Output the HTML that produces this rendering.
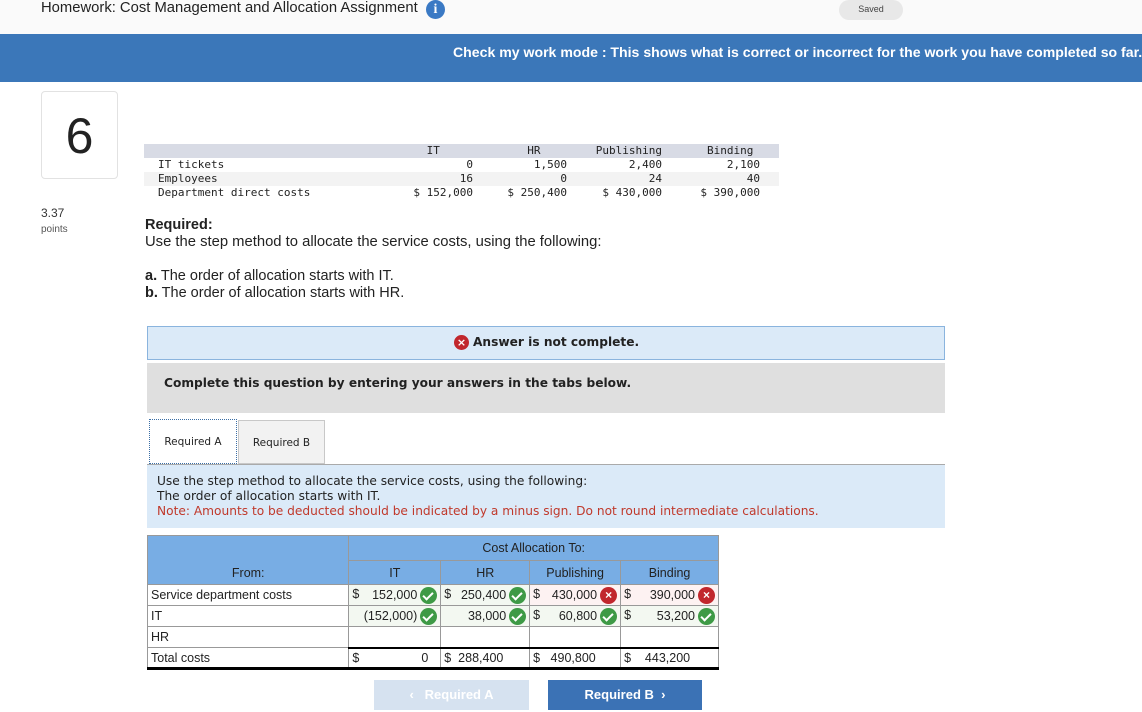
<!DOCTYPE html>
<html><head><meta charset="utf-8"><style>
*{margin:0;padding:0;box-sizing:border-box}
body{width:1142px;height:712px;position:relative;background:#fff;font-family:"Liberation Sans",sans-serif;color:#222;overflow:hidden}
.a{position:absolute}
.mono{font-family:"DejaVu Sans Mono","Liberation Mono",monospace;font-size:11px;color:#222}
.v{font-family:"DejaVu Sans","Liberation Sans",sans-serif}
.ok,.no{display:inline-block;width:17px;height:17px;border-radius:50%;vertical-align:middle;position:relative;margin-left:3px}
.ok{background:#3e9a46}
.ok:after{content:"";position:absolute;left:5px;top:3px;width:4px;height:8px;border:solid #fff;border-width:0 2px 2px 0;transform:rotate(45deg)}
.no{background:#c1272d;color:#fff;font-size:12px;font-weight:bold;text-align:center;line-height:17px}
table.t{position:absolute;left:147px;top:535px;width:572px;border-collapse:collapse;font-size:12.5px}
table.t td{border:1px solid #999;height:21px;padding:0 3px}
.hd td{background:#78ade4;text-align:center;color:#222}
.num{text-align:right}
</style></head><body>
<div class="a" style="left:0;top:0;width:1142px;height:34px;background:#fafafa"></div>
<div class="a" style="left:41px;top:0;font-size:14.8px;color:#222;white-space:nowrap">Homework: Cost Management and Allocation Assignment</div>
<div class="a" style="left:426px;top:0;width:19px;height:19px;border-radius:50%;background:#3a79c4;color:#fff;font:bold 14px 'Liberation Serif',serif;text-align:center;line-height:19px">i</div>
<div class="a" style="left:839px;top:0;width:64px;height:20px;border-radius:10px;background:#e8e8e8;font-size:9px;text-align:center;line-height:18px;color:#444">Saved</div>
<div class="a" style="left:0;top:34px;width:1142px;height:48px;background:#3b77b9"></div>
<div class="a" style="left:453px;top:44px;font-size:14.1px;font-weight:bold;color:#fff;white-space:nowrap">Check my work mode : This shows what is correct or incorrect for the work you have completed so far.</div>
<div class="a" style="left:41px;top:91px;width:77px;height:88px;border:1px solid #e2e2e2;border-radius:4px;text-align:center;font-size:50px;line-height:88px;color:#222">6</div>
<div class="a" style="left:41px;top:206px;font-size:12px;color:#333">3.37</div>
<div class="a" style="left:41px;top:224px;font-size:10px;color:#555">points</div>

<div class="a" style="left:144px;top:144px;width:635px;height:14px;background:#d8dbe5"></div>
<div class="a" style="left:144px;top:172px;width:635px;height:14px;background:#f3f3f3"></div>
<div class="a mono" style="left:158px;top:158px;line-height:14px">IT tickets<br>Employees<br>Department direct costs</div>
<div class="a mono" style="left:400px;top:144px;width:73px;text-align:right;line-height:14px">IT&nbsp;&nbsp;&nbsp;&nbsp;&nbsp;<br>0<br>16<br>$ 152,000</div>
<div class="a mono" style="left:490px;top:144px;width:77px;text-align:right;line-height:14px">HR&nbsp;&nbsp;&nbsp;&nbsp;<br>1,500<br>0<br>$ 250,400</div>
<div class="a mono" style="left:580px;top:144px;width:82px;text-align:right;line-height:14px">Publishing<br>2,400<br>24<br>$ 430,000</div>
<div class="a mono" style="left:680px;top:144px;width:80px;text-align:right;line-height:14px">Binding&nbsp;<br>2,100<br>40<br>$ 390,000</div>

<div class="a" style="left:145px;top:217px;font-size:14.5px;font-weight:bold">Required:</div>
<div class="a" style="left:145px;top:234px;font-size:14.8px;white-space:nowrap">Use the step method to allocate the service costs, using the following:</div>
<div class="a" style="left:145px;top:268px;font-size:14.5px;line-height:17px;white-space:nowrap"><b>a.</b> The order of allocation starts with IT.<br><b>b.</b> The order of allocation starts with HR.</div>

<div class="a" style="left:147px;top:326px;width:798px;height:34px;background:#dbeaf8;border:1px solid #8ab4de"></div>
<div class="a v" style="left:454px;top:335px;font-size:12.2px;font-weight:bold;white-space:nowrap"><span class="no" style="width:15px;height:15px;line-height:15px;font-size:11px;margin:0 4px 0 0">×</span>Answer is not complete.</div>
<div class="a" style="left:147px;top:363px;width:798px;height:50px;background:#dfdfdf"></div>
<div class="a v" style="left:164px;top:376px;font-size:12.2px;font-weight:bold;white-space:nowrap">Complete this question by entering your answers in the tabs below.</div>

<div class="a v" style="left:149px;top:419px;width:88px;height:45px;border:1px dotted #3a6ea5;background:#fff;font-size:10.5px;text-align:center;line-height:45px">Required A</div>
<div class="a v" style="left:238px;top:420px;width:87px;height:44px;border:1px solid #c8c8c8;background:#f2f2f2;font-size:10.5px;text-align:center;line-height:44px">Required B</div>
<div class="a" style="left:147px;top:464px;width:798px;height:1px;background:#aaa"></div>
<div class="a" style="left:147px;top:465px;width:798px;height:63px;background:#dbeaf8"></div>
<div class="a v" style="left:157px;top:474px;font-size:12.2px;line-height:15px;white-space:nowrap">Use the step method to allocate the service costs, using the following:<br>The order of allocation starts with IT.<br><span style="color:#c0392b">Note: Amounts to be deducted should be indicated by a minus sign. Do not round intermediate calculations.</span></div>

<table class="t">
<col style="width:202px"><col style="width:92px"><col style="width:89px"><col style="width:91px"><col style="width:98px">
<tr class="hd"><td rowspan="2" style="vertical-align:bottom;padding-bottom:4px">From:</td><td colspan="4" style="height:25px">Cost Allocation To:</td></tr>
<tr class="hd"><td style="height:24px">IT</td><td>HR</td><td>Publishing</td><td>Binding</td></tr>
<tr><td>Service department costs</td><td class="num" style="background:#f3f8f1"><span style="float:left">$</span>152,000<span class="ok"></span></td><td class="num" style="background:#f3f8f1"><span style="float:left">$</span>250,400<span class="ok"></span></td><td class="num" style="background:#fdf2f2"><span style="float:left">$</span>430,000<span class="no">×</span></td><td class="num" style="background:#fdf2f2"><span style="float:left">$</span>390,000<span class="no">×</span></td></tr>
<tr><td>IT</td><td class="num" style="background:#f3f8f1">(152,000)<span class="ok"></span></td><td class="num" style="background:#f3f8f1">38,000<span class="ok"></span></td><td class="num" style="background:#f3f8f1"><span style="float:left">$</span>60,800<span class="ok"></span></td><td class="num" style="background:#f3f8f1"><span style="float:left">$</span>53,200<span class="ok"></span></td></tr>
<tr><td>HR</td><td></td><td></td><td></td><td></td></tr>
<tr style="border-bottom:3px solid #000"><td>Total costs</td><td class="num" style="border-top:2px solid #000;padding-right:12px"><span style="float:left">$</span>0</td><td style="border-top:2px solid #000">$&nbsp;&nbsp;288,400</td><td style="border-top:2px solid #000">$&nbsp;&nbsp;&nbsp;490,800</td><td style="border-top:2px solid #000">$&nbsp;&nbsp;&nbsp;&nbsp;443,200</td></tr>
</table>

<div class="a" style="left:374px;top:680px;width:155px;height:30px;background:#d6e2f0;color:#fff;font-size:13px;font-weight:bold;text-align:center;line-height:30px">‹&nbsp;&nbsp; Required A</div>
<div class="a" style="left:548px;top:680px;width:154px;height:30px;background:#3b72b5;color:#fff;font-size:13px;font-weight:bold;text-align:center;line-height:30px">Required B &nbsp;›</div>
</body></html>
